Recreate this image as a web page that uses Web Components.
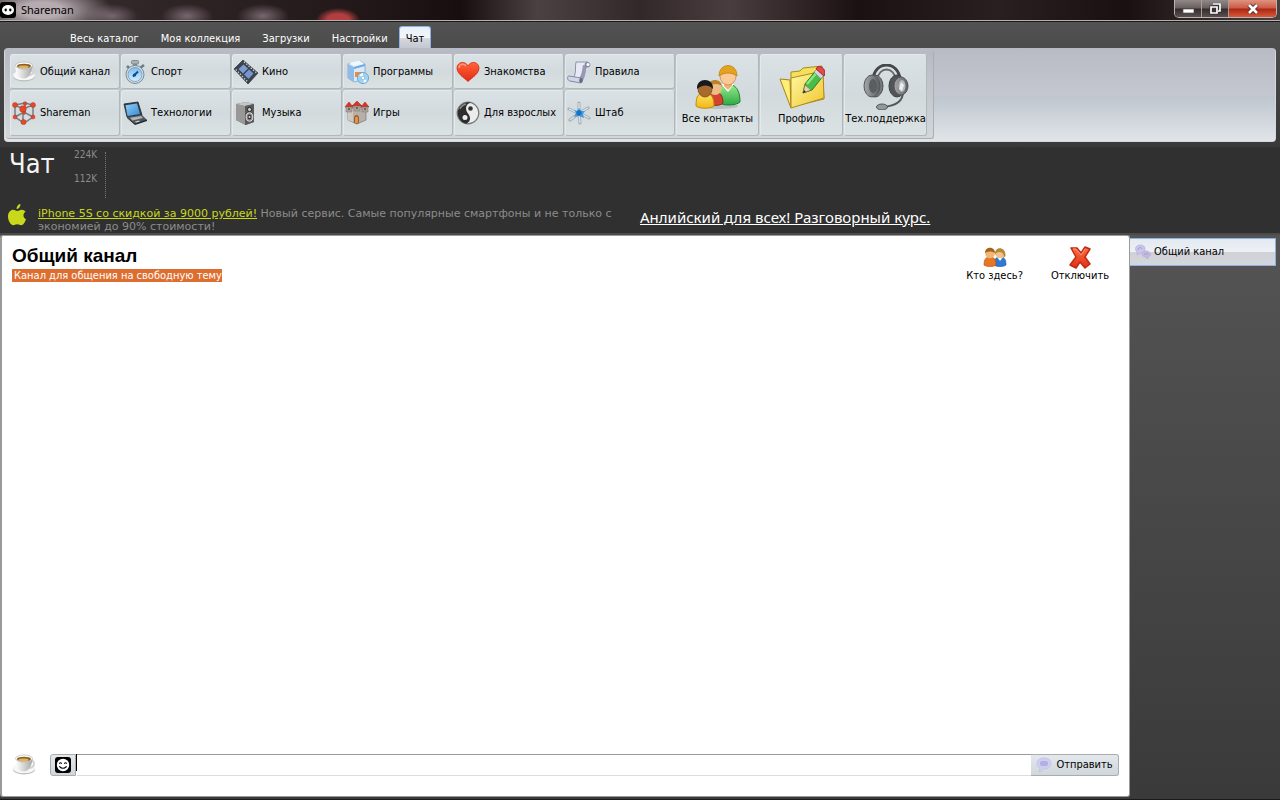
<!DOCTYPE html>
<html lang="ru">
<head>
<meta charset="utf-8">
<title>Shareman</title>
<style>
    body {
        margin: 0;
        min-height: 100vh;
        display: flex;
        flex-direction: column;
        background: #3a3a3a;
        font: 11px/14px "DejaVu Sans Condensed", "DejaVu Sans", sans-serif;
        color: #000;
    }
    chat-body { flex: 1; }
</style>
</head>
<body>
    <title-bar>Shareman</title-bar>
    <main-tabs>
        <tab-item>Весь каталог</tab-item>
        <tab-item>Моя коллекция</tab-item>
        <tab-item>Загрузки</tab-item>
        <tab-item>Настройки</tab-item>
        <tab-item active>Чат</tab-item>
    </main-tabs>
    <ribbon-bar>
        <ribbon-button icon="cup">Общий канал</ribbon-button>
        <ribbon-button icon="stopwatch">Спорт</ribbon-button>
        <ribbon-button icon="film">Кино</ribbon-button>
        <ribbon-button icon="software">Программы</ribbon-button>
        <ribbon-button icon="heart">Знакомства</ribbon-button>
        <ribbon-button icon="scroll">Правила</ribbon-button>
        <ribbon-button icon="cube">Shareman</ribbon-button>
        <ribbon-button icon="laptop">Технологии</ribbon-button>
        <ribbon-button icon="speaker">Музыка</ribbon-button>
        <ribbon-button icon="castle">Игры</ribbon-button>
        <ribbon-button icon="yinyang">Для взрослых</ribbon-button>
        <ribbon-button icon="star">Штаб</ribbon-button>
        <ribbon-button large slot="large" icon="contacts">Все контакты</ribbon-button>
        <ribbon-button large slot="large" icon="profile">Профиль</ribbon-button>
        <ribbon-button large slot="large" icon="headset">Тех.поддержка</ribbon-button>
    </ribbon-bar>
    <info-strip heading="Чат">
        <promo-link slot="promo" icon="apple" label="iPhone 5S со скидкой за 9000 рублей!">Новый сервис. Самые популярные смартфоны и не только с экономией до 90% стоимости!</promo-link>
        <promo-link slot="promo" big label="Анлийский для всех! Разговорный курс."></promo-link>
    </info-strip>
    <chat-body>
        <chat-panel heading="Общий канал" topic="Канал для общения на свободную тему">
            <panel-action slot="actions" icon="users">Кто здесь?</panel-action>
            <panel-action slot="actions" icon="cross">Отключить</panel-action>
            <message-form slot="form"></message-form>
        </chat-panel>
        <channel-item slot="side">Общий канал</channel-item>
    </chat-body>

<script>
const ICONS = {
    logo: ['0 0 16 16', `<rect width="16" height="16" rx="3" fill="#000"/><ellipse cx="8" cy="8" rx="6" ry="5" fill="#fff"/><ellipse cx="5.7" cy="8" rx="1.2" ry="1.4" fill="#000"/><ellipse cx="10.3" cy="8" rx="1.2" ry="1.4" fill="#000"/>`],
    cup: ['0 0 24 24', `<ellipse cx="12" cy="16.500" rx="11" ry="5" fill="#b9b9b9"/><ellipse cx="12" cy="15.500" rx="11" ry="4.800" fill="#f7f7f7"/><path d="M18 8c5-2 6 6-1 7" fill="none" stroke="#d4d4d4" stroke-width="2"/><path d="M3.500 6c0 8 3 12.500 8 12.500S19.500 14 20.500 6z" fill="url(#g)"/><ellipse cx="12" cy="5.500" rx="8.500" ry="3.500" fill="#fff" stroke="#aaa" stroke-width=".6"/><ellipse cx="12" cy="6" rx="7" ry="2.300" fill="#8a6328"/><ellipse cx="11.500" cy="6.900" rx="5" ry="1.300" fill="#e2b25c"/><defs><linearGradient id="g"><stop stop-color="#fff"/><stop offset="1" stop-color="#a8a8a8"/></linearGradient></defs>`],
    stopwatch: ['0 0 24 24', `<rect x="10" y="2" width="4" height="5" fill="#8b9499"/><rect x="8.500" y="0.500" width="7" height="3.500" rx="1" fill="#aab2b6" stroke="#68747a" stroke-width=".7"/><path d="M4 6l3 3M17 8l4-3" stroke="#707b80" stroke-width="2.600"/><circle cx="12" cy="14.500" r="9" fill="#d5dde1" stroke="#7b8a93"/><circle cx="12" cy="14.500" r="7" fill="url(#g)" stroke="#5993c4" stroke-width=".7"/><path d="M10 16.500l5-5" stroke="#174c78" stroke-width="2"/><circle cx="11.500" cy="15" r="1.600" fill="#174c78"/><defs><linearGradient id="g" x2="0" y2="1"><stop stop-color="#7dbdf0"/><stop offset="1" stop-color="#d3efff"/></linearGradient></defs>`],
    film: ['0 0 24 24', `<path d="M9 0L24 13 14 24 0 9z" fill="#3b434f" stroke="#20252c" stroke-width=".6"/><path d="M9.500 4.500l4.500 4-5 5-4.500-4.500z" fill="#7d9dd2"/><path d="M15 9.500l4.500 4-5 5.500-4.500-4.500z" fill="#7796cf"/><path d="M10 1.800L22.500 12.800M1.800 9.500L13.800 22" stroke="#c3cad6" stroke-width="1.400" stroke-dasharray="1.400 1.600"/>`],
    software: ['0 0 24 24', `<path d="M3 4l12-3 5 3v15L9 22l-6-4z" fill="#d9e9f8" stroke="#7ca5ce" stroke-width=".8"/><path d="M3 4l6 3v15l-6-4z" fill="#8ebbe8"/><path d="M9 7l11-3v2L9 9z" fill="#6ea6df"/><path d="M4 3l10-2.500 5 3L9 6z" fill="#eff7ff"/><path d="M10 12h7l-3 5h-4z" fill="#ee8d36"/><circle cx="18" cy="18" r="5.600" fill="#9fd5f4" stroke="#609dcd" stroke-width=".8"/><path d="M18 18l-4-3 4-2zM18 18l4 3-3 2z" fill="#f3fbff"/><circle cx="18" cy="18" r="1.800" fill="#fff" stroke="#76a9cb" stroke-width=".7"/>`],
    heart: ['0 0 24 24', `<path d="M12 21.500C7 17 1 13.500 1 8c0-6 8-8 11-2 3-6 11-4 11 2 0 5.500-6 9-11 13.500z" fill="url(#g)" stroke="#c9210f" stroke-width=".7"/><path d="M3 8c0-4 5-5 7-2" fill="none" stroke="#ff9b78" stroke-width="1.500"/><defs><linearGradient id="g" x2="0" y2="1"><stop stop-color="#ff6538"/><stop offset="1" stop-color="#e42a12"/></linearGradient></defs>`],
    scroll: ['0 0 24 24', `<path d="M9 2h11c3 0 4 5 1 5h-2c-1 3-1 9-4 14H4c3-2 3-4 4-7 1-4 0-8 1-12z" fill="#e9e9f5" stroke="#7c7f9b" stroke-width=".8"/><path d="M16 5c-1 5-1 10-4 13l4 2c3-5 2-10 4-14z" fill="#9698b6"/><path d="M20 2c-3 0-3 5-1 5h2c3 0 3-5-1-5z" fill="#8688a6"/><path d="M2 16l12 2v5L3 21c-3-.5-3-5-1-5z" fill="#d3d5e8" stroke="#73768f" stroke-width=".8"/><ellipse cx="14" cy="20.500" rx="1.800" ry="2.400" fill="#666984"/><circle cx="21" cy="4.500" r="1.500" fill="#fff"/>`],
    cube: ['0 0 24 24', `<path d="M3 4l10-2 8 2v12l-9 6-9-6zM3 4l8 4 10-4M11 8v14M3 16l9-5 9 5M13 2v10" fill="none" stroke="#777f86" stroke-width="1.500"/><g fill="#e5492a" stroke="#a9270f" stroke-width=".4"><circle cx="3" cy="4" r="2.500"/><circle cx="13" cy="2.500" r="1.800"/><circle cx="21" cy="4" r="2.500"/><circle cx="11" cy="8" r="3.300"/><circle cx="3" cy="16" r="2"/><circle cx="12" cy="12" r="1.500"/><circle cx="21" cy="16" r="2"/><circle cx="11.500" cy="21" r="2.600"/></g>`],
    laptop: ['0 0 24 24', `<path d="M1 3l14-2 4 13L4 16z" fill="#343c44" stroke="#20272d" stroke-width=".8"/><path d="M2.500 4.200L14 2.500l3 10.500-12.500 2z" fill="url(#g)"/><path d="M4 16l15-2 5 5-12 4z" fill="#4e555c"/><path d="M7 16.700l11-1.700 2 2-10.500 2.500z" fill="#aeb6bc"/><path d="M12 20.500l4-1 1 1-4 1.200z" fill="#c4cacf"/><path d="M12 22.500l12-4v1.500l-12 4-8-7v-1z" fill="#202428"/><defs><linearGradient id="g" x2="1" y2="1"><stop stop-color="#8dd1fa"/><stop offset="1" stop-color="#3989d3"/></linearGradient></defs>`],
    speaker: ['0 0 24 24', `<path d="M2 3l10-2 8 2v18l-8 3-10-5z" fill="#6b6b6b"/><path d="M2 3l9 2v19l-9-5z" fill="#989898"/><path d="M2 3l10-2 8 2-9 2z" fill="#c6c6c6"/><path d="M11 5l9-2v18l-9 3z" fill="#5a5a5a"/><ellipse cx="15.500" cy="8.500" rx="2" ry="2.200" fill="#c9c9c9" stroke="#222"/><ellipse cx="15.500" cy="16" rx="3.300" ry="4.200" fill="#888" stroke="#ddd" stroke-width="1"/><ellipse cx="15.500" cy="16" rx="1.800" ry="2.500" fill="#333"/><circle cx="15.500" cy="16" r="1" fill="#ddd"/>`],
    castle: ['0 0 24 24', `<path d="M3 7h5V6h8v1h5v12l-9 4-9-4z" fill="#b7afa8" stroke="#7e756e" stroke-width=".7"/><path d="M3 8h5v13l-5-2z" fill="#cfc9c4"/><path d="M0 6l4-5 4 5zM7 5l5-5 5 5zM16 6l4-5 4 5z" fill="#d93523" stroke="#a4190f" stroke-width=".5"/><path d="M1 6h6v5H1zM17 6h6v5h-6zM9 5h6v5H9z" fill="#aaa19a" stroke="#7e756e" stroke-width=".5"/><path d="M9 22v-5c0-4 5-4 5 0v5l-2 1z" fill="#9a5b28"/><path d="M10 22v-5c0-2 3-2 3 0v5z" fill="#d9974e"/><path d="M4 7v2M20 7v2M12 6v2" stroke="#554d47" stroke-width="1.400"/>`],
    yinyang: ['0 0 24 24', `<circle cx="12" cy="12" r="10.800" fill="#ececec" stroke="#777" stroke-width="1.200"/><path d="M15 1.600A10.800 10.800 0 1 0 10 22.700C15 21 15 16 12 12.500S9 3 15 1.600z" fill="#2e2e2e"/><circle cx="14.500" cy="7.500" r="2.300" fill="#333"/><circle cx="9" cy="16.500" r="2.500" fill="#eee"/><path d="M4 8c1-3 3-4 6-5" stroke="#8b8b8b" stroke-width="1.500" fill="none"/>`],
    star: ['0 0 24 24', `<path d="M12 2v9M2 8l9 4M21 7l-9 5M3 19l8-6M12 12l1 10M12 12l10 5" stroke="#a3adb4" stroke-width="3" stroke-linecap="round"/><path d="M12 2v9M2 8l9 4M21 7l-9 5M3 19l8-6M12 12l1 10M12 12l10 5" stroke="#e1e7eb" stroke-width="1.200"/><path d="M12 7l2 3 4 0-2 3 1 4-5-2-5 1 2-4-2-3 3 1z" fill="#3f9fe2"/><circle cx="12" cy="12" r="2.700" fill="#1773c4"/>`],
    contacts: ['0 0 46 46', `<ellipse cx="24" cy="42" rx="19" ry="3" fill="#8a938f" opacity=".4"/><path d="M23 38c0-14 3-18 9-18s13 3 13 18c-4 4-18 4-22 0z" fill="url(#a)" stroke="#18812d"/><path d="M26 20l7 8 6-8z" fill="#fff"/><path d="M29 17h8v5l-4 4-4-4z" fill="#efb173"/><ellipse cx="33" cy="12" rx="8" ry="9" fill="#fbc995" stroke="#c88b4c" stroke-width=".8"/><path d="M24 12c0-14 18-14 18 0-6-4-12-4-18 0z" fill="#e3a31d" stroke="#b97a0b" stroke-width=".7"/><path d="M14 40c0-10 3-12 7-12s7 4 7 11c-3 3-10 3-14 1z" fill="#d5442d" stroke="#962616"/><circle cx="20" cy="24" r="7" fill="#eebc86"/><path d="M13 22c1-8 13-8 14 0-5-3-9-2-14 0z" fill="#bd8226"/><path d="M1 42c0-11 3-13 9-13s9 4 9 13c-4 3-14 3-18 0z" fill="url(#b)" stroke="#c08b0c"/><ellipse cx="10" cy="25" rx="7" ry="8" fill="#a96b2d" stroke="#764312" stroke-width=".7"/><path d="M2 25c-1-12 17-12 16 0-5-5-11-4-16 0z" fill="#17191c"/><defs><linearGradient id="a" x2="0" y2="1"><stop stop-color="#9aec8f"/><stop offset="1" stop-color="#2eaa45"/></linearGradient><linearGradient id="b" x2="0" y2="1"><stop stop-color="#ffe261"/><stop offset="1" stop-color="#f2b718"/></linearGradient></defs>`],
    profile: ['0 0 46 46', `<path d="M12 8l9-1 3-3 19-2 2 33-33 8z" fill="#f5df5c" stroke="#ab8c19"/><path d="M1 15l10 1 1 28z" fill="#ffed78" stroke="#a48318"/><path d="M12 14l32-7 1 27-33 10z" fill="url(#g)" stroke="#ab8c19"/><path d="M24 29l2-9L38 5l7 6-12 15z" fill="#48bd47" stroke="#267d2a"/><path d="M28 20L39 7" stroke="#8be47e" stroke-width="2.500"/><path d="M24 29l2-8 6 5z" fill="#eed1a1" stroke="#827049" stroke-width=".6"/><path d="M24 29l1-3 2 2z" fill="#222"/><path d="M35 8l3-3 7 6-3 4z" fill="#cfd5d9" stroke="#808b91" stroke-width=".7"/><path d="M37 5c2-6 12 0 8 7z" fill="#e4494a" stroke="#a6252b"/><defs><linearGradient id="g" x2="1" y2="1"><stop stop-color="#fff9a5"/><stop offset="1" stop-color="#f1c52c"/></linearGradient></defs>`],
    headset: ['0 0 46 46', `<path d="M10 16C11-4 36-4 37 16" fill="none" stroke="#45484b" stroke-width="3"/><path d="M14 16C16 2 31 2 33 16" fill="none" stroke="#66696c" stroke-width="1.800"/><path d="M40 28c0 10-8 14-20 15" fill="none" stroke="#54585b" stroke-width="2"/><ellipse cx="12" cy="22" rx="8" ry="11" fill="#777b7e" stroke="#4c5052"/><ellipse cx="9" cy="22" rx="8" ry="11" fill="url(#g)" stroke="#54585b"/><ellipse cx="10" cy="22" rx="4" ry="7" fill="#5a5e60"/><ellipse cx="34" cy="22" rx="8" ry="11" fill="#515557" stroke="#3d4042"/><ellipse cx="38" cy="22" rx="7" ry="9" fill="url(#g)" stroke="#54585b"/><ellipse cx="39" cy="22" rx="3.500" ry="6" fill="#b4b8ba"/><path d="M38 18l3 3-2 6-3-2z" fill="#eceeef"/><ellipse cx="19" cy="43" rx="5.500" ry="3" fill="#94989a" stroke="#54585b"/><defs><linearGradient id="g"><stop stop-color="#a4a8aa"/><stop offset="1" stop-color="#5a5e60"/></linearGradient></defs>`],
    apple: ['0 0 18 22', `<path d="M12.500 0c0 3-2 5-4 5 0-3 2-5 4-5zM9 7c2 0 3-1.500 5-1.300 1.500 0 3 1 3.500 2-3 2-2.500 6 .5 7.500-1 3-3 6-4.800 6-1.500 0-2-1-4-1s-2.500 1-4 1C2.500 21 0 16.500 0 12.500 0 8 3 5.800 5 5.800 6.700 5.800 8 7 9 7z" fill="#c8d91c"/>`],
    users: ['0 0 24 20', `<path d="M11 18c0-6 2-8 6-8s6 2 6 8c-3 2-9 2-12 0z" fill="#2e79d1" stroke="#174f99" stroke-width=".6"/><path d="M14 10l3 4 3-4z" fill="#fff"/><circle cx="17" cy="6.500" r="4.800" fill="#f2c28d"/><path d="M12 8c-1-9 11-9 10.500 1l-2 2c1-5-2-6-4-6-2 0-4 1-4.500 3z" fill="#b68a32"/><path d="M1 18c0-6 2-8 6-8s6 2 6 8c-3 2-9 2-12 0z" fill="#e77720" stroke="#ad4c0d" stroke-width=".6"/><circle cx="7" cy="6.500" r="4.800" fill="#f1b678"/><path d="M2 6c0-7 10-7 10 0-4-2-6-2-10 0z" fill="#a66418"/>`],
    cross: ['0 0 24 24', `<path d="M3 3l6 0 4 5 4-6 5 2-5 8 5 7-5 4-5-6-4 6-6-3 6-8z" fill="url(#g)" stroke="#c12a15" stroke-width="1.500" stroke-linejoin="round"/><path d="M5 4l3 0 5 6 4-6" fill="none" stroke="#ff9b7b"/><defs><linearGradient id="g" x2="0" y2="1"><stop stop-color="#ff6d46"/><stop offset="1" stop-color="#df3114"/></linearGradient></defs>`],
    smile: ['0 0 16 16', `<rect width="16" height="16" rx="3" fill="#000"/><circle cx="8" cy="8" r="6.200" fill="#fff"/><path d="M4.300 6.800q1.200-2 2.400 0M9.300 6.800q1.200-2 2.400 0M4.300 9.300q3.700 4 7.400 0" fill="none" stroke="#000" stroke-width="1.100"/>`],
    bubble: ['0 0 16 16', `<path d="M8 1c4 0 7 2 7 5.500S12 12 8 12c-1 0-2 3-5 3l1-4C2 10 1 8.500 1 6.500 1 3 4 1 8 1z" fill="#cfcef0" stroke="#c3c1e6" stroke-width=".8"/><rect x="4" y="4" width="8" height="5" rx="2" fill="#b3afe2"/>`],
    bubbles: ['0 0 16 16', `<path d="M5 1c3 0 5 1 5 4S8 9 5 9l-3 2V8C-1 5 1 1 5 1z" fill="#cbc6e8" stroke="#b9b2dd" stroke-width=".8"/><path d="M11 7c3 0 5 2 4 5l-2 1v2l-3-2c-4-1-4-6 1-6z" fill="#c1bbe4" stroke="#b5aedb" stroke-width=".8"/><path d="M3 6c0-3 4-3 4-1M9 11c1-2 4-2 4 0" stroke="#a299cf"/>`],
    minimize: ['0 0 12 12', `<rect x="1" y="6" width="11" height="4" fill="#fff" stroke="#555" stroke-width=".7"/>`],
    restore: ['0 0 12 12', `<path d="M4 1h7v7H9M2 4h6v6H2z" fill="none" stroke="#333" stroke-width="3"/><path d="M4 1h7v7H9M2 4h6v6H2z" fill="none" stroke="#fff" stroke-width="1.700"/>`],
    close: ['0 0 12 12', `<path d="M2 2l8 8M10 2l-8 8" stroke="#53251f" stroke-width="4.500"/><path d="M2 2l8 8M10 2l-8 8" stroke="#fff" stroke-width="2.700"/>`]
};

const RESET = `
    :host, * { box-sizing: border-box; }
    button { font: inherit; color: inherit; margin: 0; border: 0; padding: 0; background: none; }
`;

class BaseElement extends HTMLElement {
    connectedCallback() {
        if (this.shadowRoot) return;
        this.attachShadow({ mode: 'open' });
        this.shadowRoot.innerHTML = `<style>${RESET}</style>` + this.render();
    }
    attr(name) {
        return this.getAttribute(name) || '';
    }
}

class UiIcon extends BaseElement {
    render() {
        const [box, shapes] = ICONS[this.attr('name')];
        return `
            <style>
                :host { display: block; flex: none; width: 24px; height: 24px; }
                svg { display: block; width: 100%; height: 100%; }
            </style>
            <svg viewBox="${box}" fill="none" aria-hidden="true">${shapes}</svg>
        `;
    }
}

class TitleBar extends BaseElement {
    render() {
        return `
            <style>
                :host {
                    display: flex;
                    align-items: center;
                    height: 21px;
                    color: #000;
                    font: 11px/16px "Noto Sans", sans-serif;
                    background:
                        radial-gradient(ellipse 70px 26px at 42px 10px, #b5abb0 30%, transparent),
                        radial-gradient(ellipse 26px 12px at 112px 16px, #77666f, transparent),
                        radial-gradient(ellipse 26px 12px at 187px 16px, #77666f, transparent),
                        radial-gradient(ellipse 26px 12px at 263px 16px, #77666f, transparent),
                        radial-gradient(ellipse 22px 12px at 338px 20px, #b23e40 50%, transparent),
                        linear-gradient(90deg, #3a2f31, #231819 28%, #180e10 36%, #4b4143 42%, #332829 50%, #4a3d3f 57%, #1c1112 67%, #2a1f20 78%, #1a1011 88%, #4b4040);
                    border-bottom: 1px solid #b5b1b1;
                }
                ui-icon { width: 16px; height: 16px; margin-right: 5px; }
                .controls {
                    display: flex;
                    align-self: flex-start;
                    margin: 0 3px 0 auto;
                    border: 1px solid #bbb3b3;
                    border-top: 0;
                    border-radius: 0 0 5px 5px;
                    overflow: hidden;
                }
                button {
                    display: flex;
                    align-items: center;
                    justify-content: center;
                    width: 27px;
                    height: 17px;
                    border-right: 1px solid #a69d9d;
                    background: linear-gradient(#918888, #675d5d 48%, #352b2c 52%, #5b5050);
                }
                .close {
                    width: 47px;
                    border: 0;
                    background: linear-gradient(#df9280, #cb5a44 48%, #ac2510 52%, #d8593a);
                }
                button ui-icon { width: 12px; height: 12px; margin: 0; }
            </style>
            <ui-icon name="logo"></ui-icon>
            <span><slot></slot></span>
            <div class="controls">
                <button aria-label="Свернуть"><ui-icon name="minimize"></ui-icon></button>
                <button aria-label="Восстановить"><ui-icon name="restore"></ui-icon></button>
                <button class="close" aria-label="Закрыть"><ui-icon name="close"></ui-icon></button>
            </div>
        `;
    }
}

class MainTabs extends BaseElement {
    render() {
        return `
            <style>
                :host {
                    display: flex;
                    align-items: flex-end;
                    height: 27px;
                    padding-left: 59px;
                    background: linear-gradient(#535353, #4b4b4b);
                    border-top: 1px solid #191919;
                }
            </style>
            <slot></slot>
        `;
    }
}

class TabItem extends BaseElement {
    render() {
        return `
            <style>
                :host { display: block; color: #fff; }
                button {
                    display: block;
                    height: 22px;
                    padding: 3px 11px 0;
                }
                :host([active]) { color: #000; }
                :host([active]) button {
                    padding: 2px 6px 0;
                    border: 1px solid #8eb2e6;
                    border-bottom: 0;
                    border-radius: 3px 3px 0 0;
                    background: linear-gradient(#e9f0f8, #f2f5f8 50%, #d5d9df 52%, #c4c7cf);
                }
            </style>
            <button><slot></slot></button>
        `;
    }
}

class RibbonBar extends BaseElement {
    render() {
        return `
            <style>
                :host {
                    display: block;
                    padding: 0 4px 5px;
                    background: linear-gradient(#4b4b4b, #393939);
                }
                .bar {
                    display: flex;
                    border: 1px solid #d5d8dd;
                    border-top-color: #b8bac2;
                    border-radius: 4px;
                    background: linear-gradient(#b9bbc4, #c4c7d0 50%, #bfc6ce 52%, #e1e5e9);
                }
                .group {
                    display: flex;
                    gap: 1px;
                    margin: 2px 0 2px 1px;
                    padding: 3px 6px 2px 4px;
                    border: solid #a8aeb2;
                    border-width: 0 1px 1px 0;
                    border-radius: 3px;
                    background: linear-gradient(#b7bac3, #d2d7da);
                }
                .grid {
                    display: grid;
                    grid-template-columns: repeat(6, 110px);
                    grid-template-rows: 35px 46px;
                    gap: 1px;
                }
            </style>
            <div class="bar">
                <div class="group">
                    <div class="grid"><slot></slot></div>
                    <slot name="large"></slot>
                </div>
            </div>
        `;
    }
}

class RibbonButton extends BaseElement {
    render() {
        return `
            <style>
                :host { display: flex; }
                :host([large]) { width: 83px; }
                button {
                    display: flex;
                    flex: 1;
                    align-items: center;
                    gap: 4px;
                    padding-left: 1px;
                    white-space: nowrap;
                    border: 1px solid #b1b8bb;
                    border-top-color: #e4eaec;
                    border-left-color: #e4eaec;
                    border-radius: 3px;
                    background: linear-gradient(#dbe2e5, #d2dadd 50%, #dbe2e3);
                }
                :host([large]) button {
                    flex-direction: column;
                    justify-content: center;
                    gap: 2px;
                    padding: 0;
                }
                :host([large]) ui-icon { width: 46px; height: 46px; }
            </style>
            <button><ui-icon name="${this.attr('icon')}"></ui-icon><span><slot></slot></span></button>
        `;
    }
}

class InfoStrip extends BaseElement {
    render() {
        return `
            <style>
                :host {
                    display: block;
                    color: #8c8c8c;
                    background: #303030;
                    border-bottom: 2px solid #4a4a4a;
                }
                .top { display: flex; height: 57px; }
                h1 {
                    margin: 0;
                    padding: 2px 0 0 9px;
                    width: 74px;
                    font: 27px/30px "DejaVu Sans Condensed", sans-serif;
                    color: #f4f4f4;
                }
                .scale {
                    display: flex;
                    flex-direction: column;
                    gap: 10px;
                    width: 31px;
                    font-size: 10px;
                    padding-top: 1px;
                }
                .graph { margin: 5px 0 6px; border-left: 1px dotted #777; }
                .promos { display: flex; height: 29px; }
            </style>
            <div class="top">
                <h1>${this.attr('heading')}</h1>
                <div class="scale"><span>224K</span><span>112K</span></div>
                <div class="graph"></div>
            </div>
            <div class="promos"><slot name="promo"></slot></div>
        `;
    }
}

class PromoLink extends BaseElement {
    render() {
        const icon = this.attr('icon');
        return `
            <style>
                :host {
                    display: flex;
                    gap: 12px;
                    width: 640px;
                    padding-left: 8px;
                    font: 11px/13px "DejaVu Sans", sans-serif;
                }
                :host([big]) {
                    width: auto;
                    padding: 2px 0 0;
                    font: 15px/22px "Noto Sans", sans-serif;
                }
                p { margin: 0; padding: 3px 8px 0 0; }
                :host([big]) p { padding: 0; }
                ui-icon { width: 18px; height: 22px; }
                a { color: #c8d91c; }
                :host([big]) a { color: #fff; }
            </style>
            ${icon ? `<ui-icon name="${icon}"></ui-icon>` : ''}
            <p><a href="#">${this.attr('label')}</a> <slot></slot></p>
        `;
    }
}

class ChatBody extends BaseElement {
    render() {
        return `
            <style>
                :host {
                    display: flex;
                    padding-bottom: 2px;
                    background: linear-gradient(#545454, #3a3a3a);
                    border-bottom: 1px solid #1a1a1a;
                }
                .main { display: flex; flex: 1; }
                aside { width: 150px; padding-top: 3px; }
            </style>
            <div class="main"><slot></slot></div>
            <aside><slot name="side"></slot></aside>
        `;
    }
}

class ChatPanel extends BaseElement {
    render() {
        return `
            <style>
                :host {
                    display: flex;
                    flex: 1;
                    flex-direction: column;
                    justify-content: space-between;
                    padding: 8px 10px 20px;
                    background: #fff;
                    border: 1px solid #9a9a9a;
                    border-left-width: 2px;
                    border-radius: 3px;
                }
                header { display: flex; justify-content: space-between; }
                h2 { margin: 0 0 1px; font: bold 19px/24px "Liberation Sans", sans-serif; }
                .topic {
                    display: inline-block;
                    padding: 0 0 0 2px;
                    line-height: 13px;
                    color: #fff;
                    background: #dd6e2f;
                }
                .actions { display: flex; gap: 28px; padding: 1px 10px 0 0; }
            </style>
            <header>
                <div>
                    <h2>${this.attr('heading')}</h2>
                    <span class="topic">${this.attr('topic')}</span>
                </div>
                <div class="actions"><slot name="actions"></slot></div>
            </header>
            <slot name="form"></slot>
        `;
    }
}

class PanelAction extends BaseElement {
    render() {
        return `
            <style>
                :host { display: block; }
                button { display: flex; flex-direction: column; align-items: center; }
            </style>
            <button><ui-icon name="${this.attr('icon')}"></ui-icon><span><slot></slot></span></button>
        `;
    }
}

class MessageForm extends BaseElement {
    render() {
        return `
            <style>
                :host { display: block; }
                form { display: flex; align-items: center; height: 22px; }
                form > ui-icon { margin-right: 14px; }
                button {
                    display: flex;
                    align-items: center;
                    justify-content: center;
                    height: 22px;
                    border: 1px solid #a9acae;
                    background: linear-gradient(#e2e8eb, #d0d7da);
                }
                button ui-icon { width: 16px; height: 16px; }
                .smile { width: 26px; border-radius: 3px 0 0 3px; }
                .send { width: 88px; gap: 4px; border-left: 0; border-radius: 0 3px 3px 0; }
                .caret { align-self: flex-start; width: 1px; height: 17px; background: #000; }
                input {
                    flex: 1;
                    min-width: 0;
                    height: 22px;
                    border: solid #999;
                    border-width: 1px 0;
                    border-bottom-color: #ddd;
                    padding: 0 4px;
                    font: inherit;
                    outline: 0;
                }
            </style>
            <form onsubmit="return false">
                <ui-icon name="cup"></ui-icon>
                <button type="button" class="smile" aria-label="Смайлы"><ui-icon name="smile"></ui-icon></button>
                <span class="caret"></span>
                <input type="text" aria-label="Сообщение">
                <button class="send"><ui-icon name="bubble"></ui-icon><span>Отправить</span></button>
            </form>
        `;
    }
}

class ChannelItem extends BaseElement {
    render() {
        return `
            <style>
                :host { display: block; margin-right: 4px; }
                button {
                    display: flex;
                    align-items: center;
                    gap: 3px;
                    width: 100%;
                    height: 28px;
                    padding-left: 5px;
                    border: 1px solid #91b0df;
                    border-left: 0;
                    background: linear-gradient(#e3eaf2, #eef0f4 50%, #cfd1d5 52%, #d3d7dc);
                }
                ui-icon { width: 16px; height: 16px; }
            </style>
            <button><ui-icon name="bubbles"></ui-icon><span><slot></slot></span></button>
        `;
    }
}

customElements.define('ui-icon', UiIcon);
customElements.define('title-bar', TitleBar);
customElements.define('main-tabs', MainTabs);
customElements.define('tab-item', TabItem);
customElements.define('ribbon-bar', RibbonBar);
customElements.define('ribbon-button', RibbonButton);
customElements.define('info-strip', InfoStrip);
customElements.define('promo-link', PromoLink);
customElements.define('chat-body', ChatBody);
customElements.define('chat-panel', ChatPanel);
customElements.define('panel-action', PanelAction);
customElements.define('message-form', MessageForm);
customElements.define('channel-item', ChannelItem);
</script>
</body>
</html>
